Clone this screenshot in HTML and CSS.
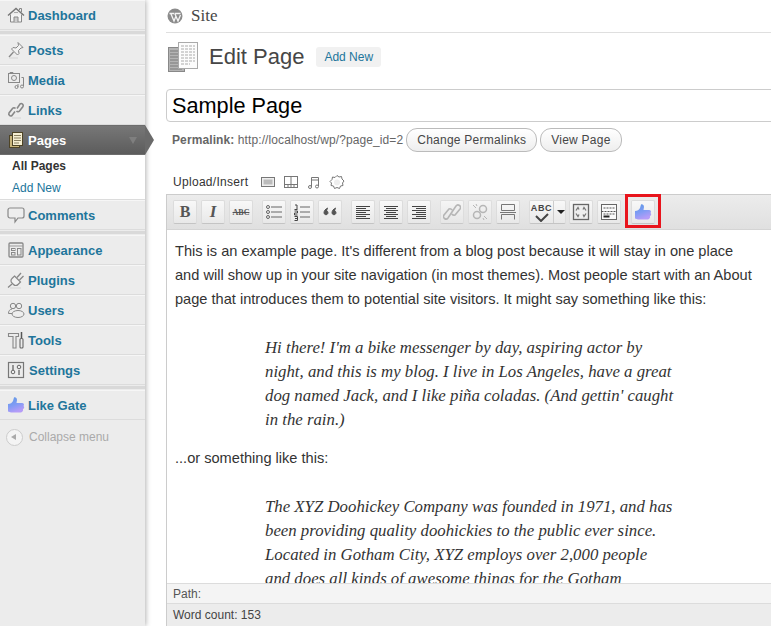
FILE: index.html

```html
<!DOCTYPE html>
<html lang="en">
<head>
  <meta charset="UTF-8" />
  <title>Edit Page - Site</title>
  <link rel="stylesheet" href="styles.css">
</head>
<body>

<svg class="svg-defs" width="0" height="0">
  <defs>
    <linearGradient id="thumbFill" x1="0" y1="0" x2="0.4" y2="1">
      <stop offset="0" stop-color="#5f98e4"/>
      <stop offset="0.55" stop-color="#7f9cf4"/>
      <stop offset="1" stop-color="#b59cf8"/>
    </linearGradient>
  </defs>
</svg>

<aside class="sidebar">
  <a class="menu-item" href="#">
    <svg class="menu-icon" viewBox="0 0 18 18"><path d="M3.500 8.500V16h11V8.500" fill="#f4f4f4" stroke="#888"/><path d="M1 9.500 9 2.500l8 7" fill="none" stroke="#777" stroke-width="1.500"/><path d="M12.500 4V2.500h2V6" fill="none" stroke="#888"/><path d="M7 16v-5h4v5" fill="#ccc" stroke="#888"/><path d="M7 6.500h4" stroke="#aaa"/></svg>
    Dashboard
  </a>
  <div class="menu-sep"></div>
  <a class="menu-item" href="#">
    <svg class="menu-icon" viewBox="0 0 18 18"><path d="M11 1.500l5 5-2 .5-2.500 2.500.5 3-1.500 1.500-6-6L6 6.500l3 .5L11.500 4.500z" fill="#f2f2f2" stroke="#888"/><path d="M6.500 11L2 16" stroke="#888" stroke-width="1.300"/><path d="M2 17h9" stroke="#d4d4d4"/></svg>
    Posts
  </a>
  <a class="menu-item" href="#">
    <svg class="menu-icon" viewBox="0 0 18 18"><rect x="1.500" y="2.500" width="11" height="9" fill="none" stroke="#888"/><path d="M3 2.500v-1h3v1" fill="none" stroke="#888"/><circle cx="7" cy="7" r="2.500" fill="none" stroke="#888"/><path d="M14.500 6.500h2v8.500M11 13v3" fill="none" stroke="#888"/><circle cx="9.500" cy="16" r="1.500" fill="none" stroke="#888"/><circle cx="15" cy="15.500" r="1.500" fill="none" stroke="#888"/></svg>
    Media
  </a>
  <a class="menu-item" href="#">
    <svg class="menu-icon" viewBox="0 0 18 18"><path d="M8 10.500l-3 4a2 2 0 0 1-3-2.500l3.500-4.500a2 2 0 0 1 3 0" fill="none" stroke="#888" stroke-width="1.600"/><path d="M10 7.500l3-4.500a2 2 0 0 1 3 2.500l-3.500 4.500a2 2 0 0 1-3 0" fill="none" stroke="#888" stroke-width="1.600"/><path d="M5 17h9" stroke="#d4d4d4"/></svg>
    Links
  </a>
  <a class="menu-item menu-current" href="#">
    <svg class="menu-icon" viewBox="0 0 18 18"><rect x="2.500" y="4.500" width="10" height="12" fill="#c9b67c" stroke="#4e4426"/><rect x="5.500" y="1.500" width="10" height="13" fill="#f6efd2" stroke="#4e4426"/><path d="M7 4.500h7M7 7h7M7 9.500h7M7 12h5" stroke="#8a8060"/></svg>
    Pages
    <span class="menu-arrow"></span>
  </a>
  <div class="submenu">
    <a class="submenu-item submenu-current" href="#">All Pages</a>
    <a class="submenu-item" href="#">Add New</a>
  </div>
  <a class="menu-item" href="#">
    <svg class="menu-icon" viewBox="0 0 18 18"><path d="M3 2h12a2 2 0 0 1 2 2v6a2 2 0 0 1-2 2h-4l-3 4v-4H3a2 2 0 0 1-2-2V4a2 2 0 0 1 2-2z" fill="#eee" stroke="#888" stroke-width="1.200"/></svg>
    Comments
  </a>
  <div class="menu-sep"></div>
  <a class="menu-item" href="#">
    <svg class="menu-icon" viewBox="0 0 18 18"><rect x="2" y="2" width="14" height="14" rx="1" fill="none" stroke="#888" stroke-width="1.300"/><path d="M2 5h14" stroke="#999"/><rect x="4.500" y="7.500" width="3.500" height="2" fill="none" stroke="#888"/><rect x="4.500" y="11.500" width="3.500" height="2.500" fill="none" stroke="#888"/><rect x="10.500" y="7.500" width="3.500" height="6.500" fill="none" stroke="#888"/></svg>
    Appearance
  </a>
  <a class="menu-item" href="#">
    <svg class="menu-icon" viewBox="0 0 18 18"><path d="M7.500 5l6 6-2.500 2.500a3 3 0 0 1-4.500 0L5 12a3 3 0 0 1 0-4.500z" fill="#f2f2f2" stroke="#888" stroke-width="1.200"/><path d="M5 13l-4 3.500M10 6.500l4-4.500M12.500 9l4-4" fill="none" stroke="#888" stroke-width="1.300"/><path d="M3 17h11" stroke="#d4d4d4"/></svg>
    Plugins
  </a>
  <a class="menu-item" href="#">
    <svg class="menu-icon" viewBox="0 0 18 18"><circle cx="6" cy="5" r="2.700" fill="none" stroke="#888"/><circle cx="12" cy="5" r="2.700" fill="#eee" stroke="#888"/><path d="M5 8C2.500 8.500 1.500 10 1.500 12.500H5" fill="none" stroke="#888"/><ellipse cx="11" cy="13" rx="6" ry="3.500" fill="#eee" stroke="#888"/></svg>
    Users
  </a>
  <a class="menu-item" href="#">
    <svg class="menu-icon" viewBox="0 0 18 18"><path d="M1.500 2.500h10v3H9V17H6V5.500H1.500z" fill="none" stroke="#888" stroke-width="1.100"/><path d="M14.500 1v6" stroke="#555" stroke-width="1.500"/><rect x="13" y="7.500" width="3" height="9.500" rx="1" fill="none" stroke="#666" stroke-width="1.100"/></svg>
    Tools
  </a>
  <a class="menu-item menu-item-settings" href="#">
    <svg class="menu-icon" viewBox="0 0 18 18"><rect x="1.500" y="1.500" width="15" height="15" fill="none" stroke="#777" stroke-width="1.200"/><path d="M6 4v5M12 9v5" stroke="#666" stroke-width="1.300"/><circle cx="6" cy="11" r="1.800" fill="none" stroke="#666"/><circle cx="12" cy="6" r="1.800" fill="none" stroke="#666"/></svg>
    Settings
  </a>
  <div class="menu-sep"></div>
  <a class="menu-item" href="#">
    <svg class="menu-icon" viewBox="0 0 18 18"><path class="thumb" d="M1 8C3.500 8 5 7 6 5L7 1.500C8.500 1 10 2 10 4L9.500 7H15C17 7 17.500 9 16.500 10 17.500 11 17.500 12.500 16 13 16.500 15 15 16.500 13.500 16.500H7C5 16.500 3 16.500 1 15.500z"/></svg>
    Like Gate
  </a>
  <div class="collapse">
    <span class="collapse-btn"></span>
    Collapse menu
  </div>
</aside>

<main class="content">
  <div class="site-head">
    <svg class="wp-logo" viewBox="0 0 16 16"><circle cx="8" cy="8" r="7.500" fill="#8c8c8c"/><path d="M2.500 5.500h5M8 5.500h5.500M4 6l3 7 2-5M8 6l3 7 2.500-6" fill="none" stroke="#f4f4f4" stroke-width="1.300"/></svg>
    <span class="site-name">Site</span>
  </div>

  <div class="title-row">
    <svg class="page-icon" viewBox="0 0 32 32"><rect x="2.500" y="6.500" width="16" height="24" fill="#b4b4b4" stroke="#888"/><path d="M4 10h9M4 13h9M4 16h9M4 19h9M4 22h9M4 25h9M4 28h12" stroke="#7a7a7a"/><rect x="12.500" y="1.500" width="19" height="26" fill="#fcfcfc" stroke="#aaa"/><path d="M15 5h14M15 8h14M15 11h14M15 14h14M15 17h14M15 20h14M15 23h9" stroke="#aaa" stroke-dasharray="3 1"/></svg>
    <h2>Edit Page</h2>
    <a class="add-new" href="#">Add New</a>
  </div>

  <div class="title-input">Sample Page</div>

  <div class="permalink">
    <b>Permalink:</b>&nbsp;http://localhost/wp/?page_id=2
    <a class="pill" href="#">Change Permalinks</a>
    <a class="pill" href="#">View Page</a>
  </div>

  <div class="upload-row">
    <span>Upload/Insert</span>
    <svg class="upload-icon" viewBox="0 0 16 16"><rect x="1.500" y="3.500" width="13" height="9" fill="#eee" stroke="#777"/><rect x="3.500" y="5.500" width="9" height="5" fill="#bbb"/></svg>
    <svg class="upload-icon" viewBox="0 0 16 16"><rect x="1.500" y="2.500" width="13" height="11" fill="#fff" stroke="#777"/><path d="M1.500 10.500h13M5 10.500v3M8 10.500v3M11 10.500v3M8 2.500v8" stroke="#777"/></svg>
    <svg class="upload-icon" viewBox="0 0 16 16"><path d="M5.500 13V3.500h7V12M5.500 6h7" fill="none" stroke="#777"/><circle cx="4" cy="13" r="1.500" fill="none" stroke="#777"/><circle cx="11" cy="12.500" r="1.500" fill="none" stroke="#777"/></svg>
    <svg class="upload-icon" viewBox="0 0 16 16"><path d="M8 1.500l2 1.500 2.500-.5.500 2.500 2 2-1.500 2 .5 2.500-2.500.5-1 2.500-2.500-1-2.500 1-1-2.500-2.500-.5.500-2.500L1 7.500l2-2L3.500 3 6 3.500z" fill="#fff" stroke="#777"/><circle cx="8" cy="8.500" r="3" fill="#eee"/></svg>
  </div>

  <div class="editor">
    <div class="toolbar">
      <div class="tool-group">
        <span class="tool tool-b">B</span>
        <span class="tool tool-i">I</span>
        <span class="tool tool-abc">ABC</span>
      </div>
      <div class="tool-group">
        <span class="tool"><svg viewBox="0 0 18 18"><circle cx="3" cy="4" r="1.500" fill="none" stroke="#666"/><circle cx="3" cy="9" r="1.500" fill="none" stroke="#666"/><circle cx="3" cy="14" r="1.500" fill="none" stroke="#666"/><path d="M6 4h11M6 9h11M6 14h11" stroke="#666"/></svg></span>
        <span class="tool"><svg viewBox="0 0 18 18"><path d="M2 2h2v4M1.500 6.500h3M1.500 8h3v2h-3v2h3M1.500 13.500h3v4h-3M2 15.500h2" fill="none" stroke="#444"/><path d="M7 4h10M7 9h10M7 14h10" stroke="#666"/></svg></span>
        <span class="tool"><svg viewBox="0 0 18 18"><path d="M7 5C4 6 3 8 3 10a2 2 0 1 0 3-2M15 5c-3 1-4 3-4 5a2 2 0 1 0 3-2" fill="#555" stroke="#555"/></svg></span>
      </div>
      <div class="tool-group">
        <span class="tool"><svg viewBox="0 0 18 18"><path d="M2 3.500h14M2 5.500h10M2 7.500h14M2 9.500h10M2 11.500h14M2 13.500h10M2 15.500h14" stroke="#444"/></svg></span>
        <span class="tool"><svg viewBox="0 0 18 18"><path d="M2 3.500h14M4 5.500h10M2 7.500h14M4 9.500h10M2 11.500h14M4 13.500h10M2 15.500h14" stroke="#444"/></svg></span>
        <span class="tool"><svg viewBox="0 0 18 18"><path d="M2 3.500h14M6 5.500h10M2 7.500h14M6 9.500h10M2 11.500h14M6 13.500h10M2 15.500h14" stroke="#444"/></svg></span>
      </div>
      <div class="tool-group">
        <span class="tool tool-off"><svg viewBox="0 0 18 18"><path d="M9 9l4-6a2.500 2.500 0 0 1 4 3l-5 6a2.500 2.500 0 0 1-3-1M9 9l-4 6a2.500 2.500 0 0 1-4-3l5-6a2.500 2.500 0 0 1 3 1" fill="none" stroke="#aaa" stroke-width="1.600"/></svg></span>
        <span class="tool tool-off"><svg viewBox="0 0 18 18"><circle cx="12" cy="6" r="3.500" fill="none" stroke="#aaa" stroke-width="1.500"/><circle cx="6" cy="12" r="3.500" fill="none" stroke="#aaa" stroke-width="1.500"/><path d="M2 2l3 3M5 1l1 2M13 13l3 3M12 15l1 2" stroke="#aaa"/></svg></span>
        <span class="tool"><svg viewBox="0 0 18 18"><path d="M2.500 1.500v6h13v-6zM1 9.500h16M2.500 16.500v-5h13v5" fill="none" stroke="#777"/></svg></span>
      </div>
      <div class="tool-group">
        <span class="tool tool-split">
          <span class="spell">
            <span class="spell-text">ABC</span>
            <svg viewBox="0 0 16 9"><path d="M2 3l5 5 7-7" fill="none" stroke="#444" stroke-width="2"/></svg>
          </span>
          <span class="spell-drop"></span>
        </span>
        <span class="tool"><svg viewBox="0 0 18 18"><rect x="1.500" y="1.500" width="15" height="15" fill="#eee" stroke="#666" stroke-width="1.300"/><path d="M4 7.500l2-3 1 2M14 7.500l-2-3-1 2M4 10.500l2 3 1-2M14 10.500l-2 3-1-2" fill="none" stroke="#777" stroke-width="1.300"/></svg></span>
        <span class="tool"><svg viewBox="0 0 18 18"><rect x="1.500" y="1.500" width="15" height="15" fill="#fafafa" stroke="#666"/><path d="M1.500 8.500h15M3.500 5h11M3.500 11h11" stroke="#555" stroke-dasharray="2 1"/><path d="M3.500 13.500h6" stroke="#222" stroke-width="2"/></svg></span>
        <span class="tool-mark">
          <span class="tool"><svg viewBox="0 0 18 18"><path class="thumb" d="M1 8C3.500 8 5 7 6 5L7 1.500C8.500 1 10 2 10 4L9.500 7H15C17 7 17.500 9 16.500 10 17.500 11 17.500 12.500 16 13 16.500 15 15 16.500 13.500 16.500H7C5 16.500 3 16.500 1 15.500z"/></svg></span>
        </span>
      </div>
    </div>

    <div class="editor-body">
      <p>This is an example page. It's different from a blog post because it will stay in one place and will show up in your site navigation (in most themes). Most people start with an About page that introduces them to potential site visitors. It might say something like this:</p>
      <blockquote>Hi there! I'm a bike messenger by day, aspiring actor by night, and this is my blog. I live in Los Angeles, have a great dog named Jack, and I like piña coladas. (And gettin' caught in the rain.)</blockquote>
      <p>...or something like this:</p>
      <blockquote>The XYZ Doohickey Company was founded in 1971, and has been providing quality doohickies to the public ever since. Located in Gotham City, XYZ employs over 2,000 people and does all kinds of awesome things for the Gotham community.</blockquote>
    </div>

    <div class="path-bar">Path:</div>
    <div class="count-bar">Word count: 153</div>
  </div>
</main>

</body>
</html>
```

FILE: styles.css

```css
html, body {
  height: 626px;
}

body {
  margin: 0;
  display: flex;
  overflow: hidden;
  font-family: "Liberation Sans", Arial, sans-serif;
  background-color: #fff;
  color: #333;
}

a {
  text-decoration: none;
}

.svg-defs {
  position: absolute;
}

.thumb {
  fill: url(#thumbFill);
}

/* sidebar */
.sidebar {
  flex: 0 0 145px;
  background-color: #ececec;
  box-shadow: 1px 0 5px rgba(0, 0, 0, 0.3);
  position: relative;
}

.menu-item {
  display: flex;
  align-items: center;
  height: 30px;
  box-sizing: border-box;
  padding-left: 7px;
  color: #21759b;
  font-size: 13px;
  font-weight: bold;
  border-top: 1px solid #f6f6f6;
  border-bottom: 1px solid #dcdcdc;
}

.menu-icon {
  width: 18px;
  height: 18px;
  margin-right: 3px;
  flex: none;
}

.menu-item-settings .menu-icon {
  margin-right: 4px;
}

.menu-sep {
  height: 3px;
  margin: 1px 0;
  background-color: #d9d9d9;
}

.menu-current {
  position: relative;
  color: #fff;
  background: linear-gradient(#777, #5c5c5c);
  border-color: #6d6d6d;
}

.menu-current::after {
  content: "";
  position: absolute;
  left: 100%;
  top: -1px;
  border-style: solid;
  border-width: 15px 0 15px 9px;
  border-color: transparent transparent transparent #6a6a6a;
}

.menu-arrow {
  margin-left: auto;
  margin-right: 8px;
  border-style: solid;
  border-width: 7px 4px 0;
  border-color: #7f7f7f transparent transparent;
}

.submenu {
  height: 45px;
  background-color: #fff;
  box-sizing: border-box;
  border-bottom: 1px solid #dcdcdc;
}

.submenu-item {
  display: block;
  height: 22px;
  line-height: 22px;
  padding-left: 12px;
  font-size: 12px;
  color: #21759b;
}

.submenu-current {
  font-weight: bold;
  color: #333;
}

.collapse {
  display: flex;
  align-items: center;
  margin-top: 6px;
  padding-left: 6px;
  height: 22px;
  font-size: 12px;
  color: #aaa;
}

.collapse-btn {
  position: relative;
  width: 15px;
  height: 15px;
  margin-right: 6px;
  border-radius: 50%;
  background-color: #f4f4f4;
  border: 1px solid #ccc;
}

.collapse-btn::after {
  content: "";
  position: absolute;
  left: 4px;
  top: 4px;
  border-style: solid;
  border-width: 3.5px 5px 3.5px 0;
  border-color: transparent #aaa transparent transparent;
}

/* main column */
.content {
  flex: 1;
  min-width: 0;
  padding-left: 21px;
}

.site-head {
  display: flex;
  align-items: center;
  height: 32px;
  border-bottom: 1px solid #dfdfdf;
  padding-left: 1px;
}

.wp-logo {
  width: 16px;
  height: 16px;
  margin-right: 8px;
}

.site-name {
  font-family: "Liberation Serif", serif;
  font-size: 17px;
  color: #464646;
}

.title-row {
  display: flex;
  align-items: center;
  height: 48px;
  padding-bottom: 8px;
}

.page-icon {
  width: 32px;
  height: 32px;
  margin-right: 11px;
}

.title-row h2 {
  margin: 0 12px 0 0;
  font-size: 22px;
  font-weight: normal;
  color: #464646;
}

.add-new {
  padding: 3px 8px;
  font-size: 12px;
  color: #21759b;
  background-color: #f1f1f1;
  border-radius: 3px;
}

.title-input {
  height: 33px;
  line-height: 32px;
  box-sizing: border-box;
  margin-right: -4px;
  padding-left: 5px;
  border: 1px solid #ccc;
  border-radius: 4px;
  font-size: 21.7px;
  color: #000;
}

.permalink {
  display: flex;
  align-items: center;
  height: 24px;
  margin-top: 6px;
  padding-left: 6px;
  font-size: 12px;
  letter-spacing: 0.1px;
  color: #666;
}

.pill {
  margin-left: 3px;
  height: 22px;
  line-height: 22px;
  padding: 0 10px;
  border: 1px solid #bbb;
  border-radius: 11px;
  background: linear-gradient(#fff, #eee);
  letter-spacing: 0.25px;
  color: #464646;
}

.upload-row {
  display: flex;
  align-items: center;
  height: 20px;
  margin-top: 20px;
  margin-bottom: 2px;
  padding-left: 7px;
  font-size: 12px;
  letter-spacing: 0.3px;
  color: #333;
}

.upload-row span {
  margin-right: 12px;
}

.upload-icon {
  width: 16px;
  height: 16px;
  margin-right: 7px;
}

/* editor */
.editor {
  height: 432px;
  margin-right: -4px;
  display: flex;
  flex-direction: column;
  border-left: 1px solid #ccc;
}

.toolbar {
  flex: none;
  display: flex;
  gap: 9px;
  height: 36px;
  box-sizing: border-box;
  padding: 5px 0 0 6px;
  background: linear-gradient(#ececec, #e0e0e0);
  border-top: 1px solid #ccc;
  border-bottom: 1px solid #d4d4d4;
}

.tool-group {
  display: flex;
  gap: 4px;
}

.tool {
  display: flex;
  align-items: center;
  justify-content: center;
  width: 24px;
  height: 24px;
  box-sizing: border-box;
  background: linear-gradient(#f8f8f8, #e8e8e8);
  border: 1px solid #dcdcdc;
  border-bottom-color: #c4c4c4;
  border-radius: 2px;
  color: #555;
}

.tool svg {
  width: 18px;
  height: 18px;
}

.tool-b {
  font-family: "Liberation Serif", serif;
  font-size: 16px;
  font-weight: bold;
}

.tool-i {
  font-family: "Liberation Serif", serif;
  font-size: 17px;
  font-weight: bold;
  font-style: italic;
}

.tool-abc {
  font-family: "Liberation Serif", serif;
  font-size: 8px;
  font-weight: bold;
  text-decoration: line-through;
}

.tool-off {
  opacity: 0.8;
}

.tool-split {
  width: 37px;
  margin-right: -1px;
  justify-content: flex-start;
}

.spell {
  display: flex;
  flex-direction: column;
  align-items: center;
  width: 24px;
  border-right: 1px solid #ccc;
  height: 22px;
  box-sizing: border-box;
  padding-top: 3px;
}

.spell-text {
  font-size: 9px;
  line-height: 9px;
  font-weight: bold;
  letter-spacing: 0.7px;
  color: #444;
}

.tool-split .spell svg {
  width: 16px;
  height: 9px;
}

.spell-drop {
  margin-left: 3px;
  border-style: solid;
  border-width: 4px 4px 0;
  border-color: #222 transparent transparent;
}

.tool-mark {
  position: relative;
  margin-left: 6px;
}

.tool-mark::after {
  content: "";
  position: absolute;
  left: -6px;
  top: -6px;
  width: 30px;
  height: 28px;
  border: 3px solid #e8141c;
}

.editor-body {
  flex: 1;
  min-height: 0;
  overflow: hidden;
  padding: 9px 8px 0;
  font-size: 14.6px;
  line-height: 24px;
  color: #333;
}

.editor-body p {
  margin: 0 0 13px;
  max-width: 580px;
}

.editor-body blockquote {
  margin: 0 0 14px;
  padding: 12px 93px 0 90px;
  font-family: "Liberation Serif", serif;
  font-size: 16.8px;
  font-style: italic;
  color: #333;
}

.path-bar {
  flex: none;
  height: 21px;
  line-height: 20px;
  box-sizing: border-box;
  padding-left: 6px;
  font-size: 12px;
  color: #555;
  background-color: #f4f4f4;
  border-top: 1px solid #dcdcdc;
  border-bottom: 1px solid #dcdcdc;
}

.count-bar {
  flex: none;
  height: 22px;
  line-height: 22px;
  padding-left: 6px;
  font-size: 12px;
  color: #444;
  background-color: #ececec;
}
```
